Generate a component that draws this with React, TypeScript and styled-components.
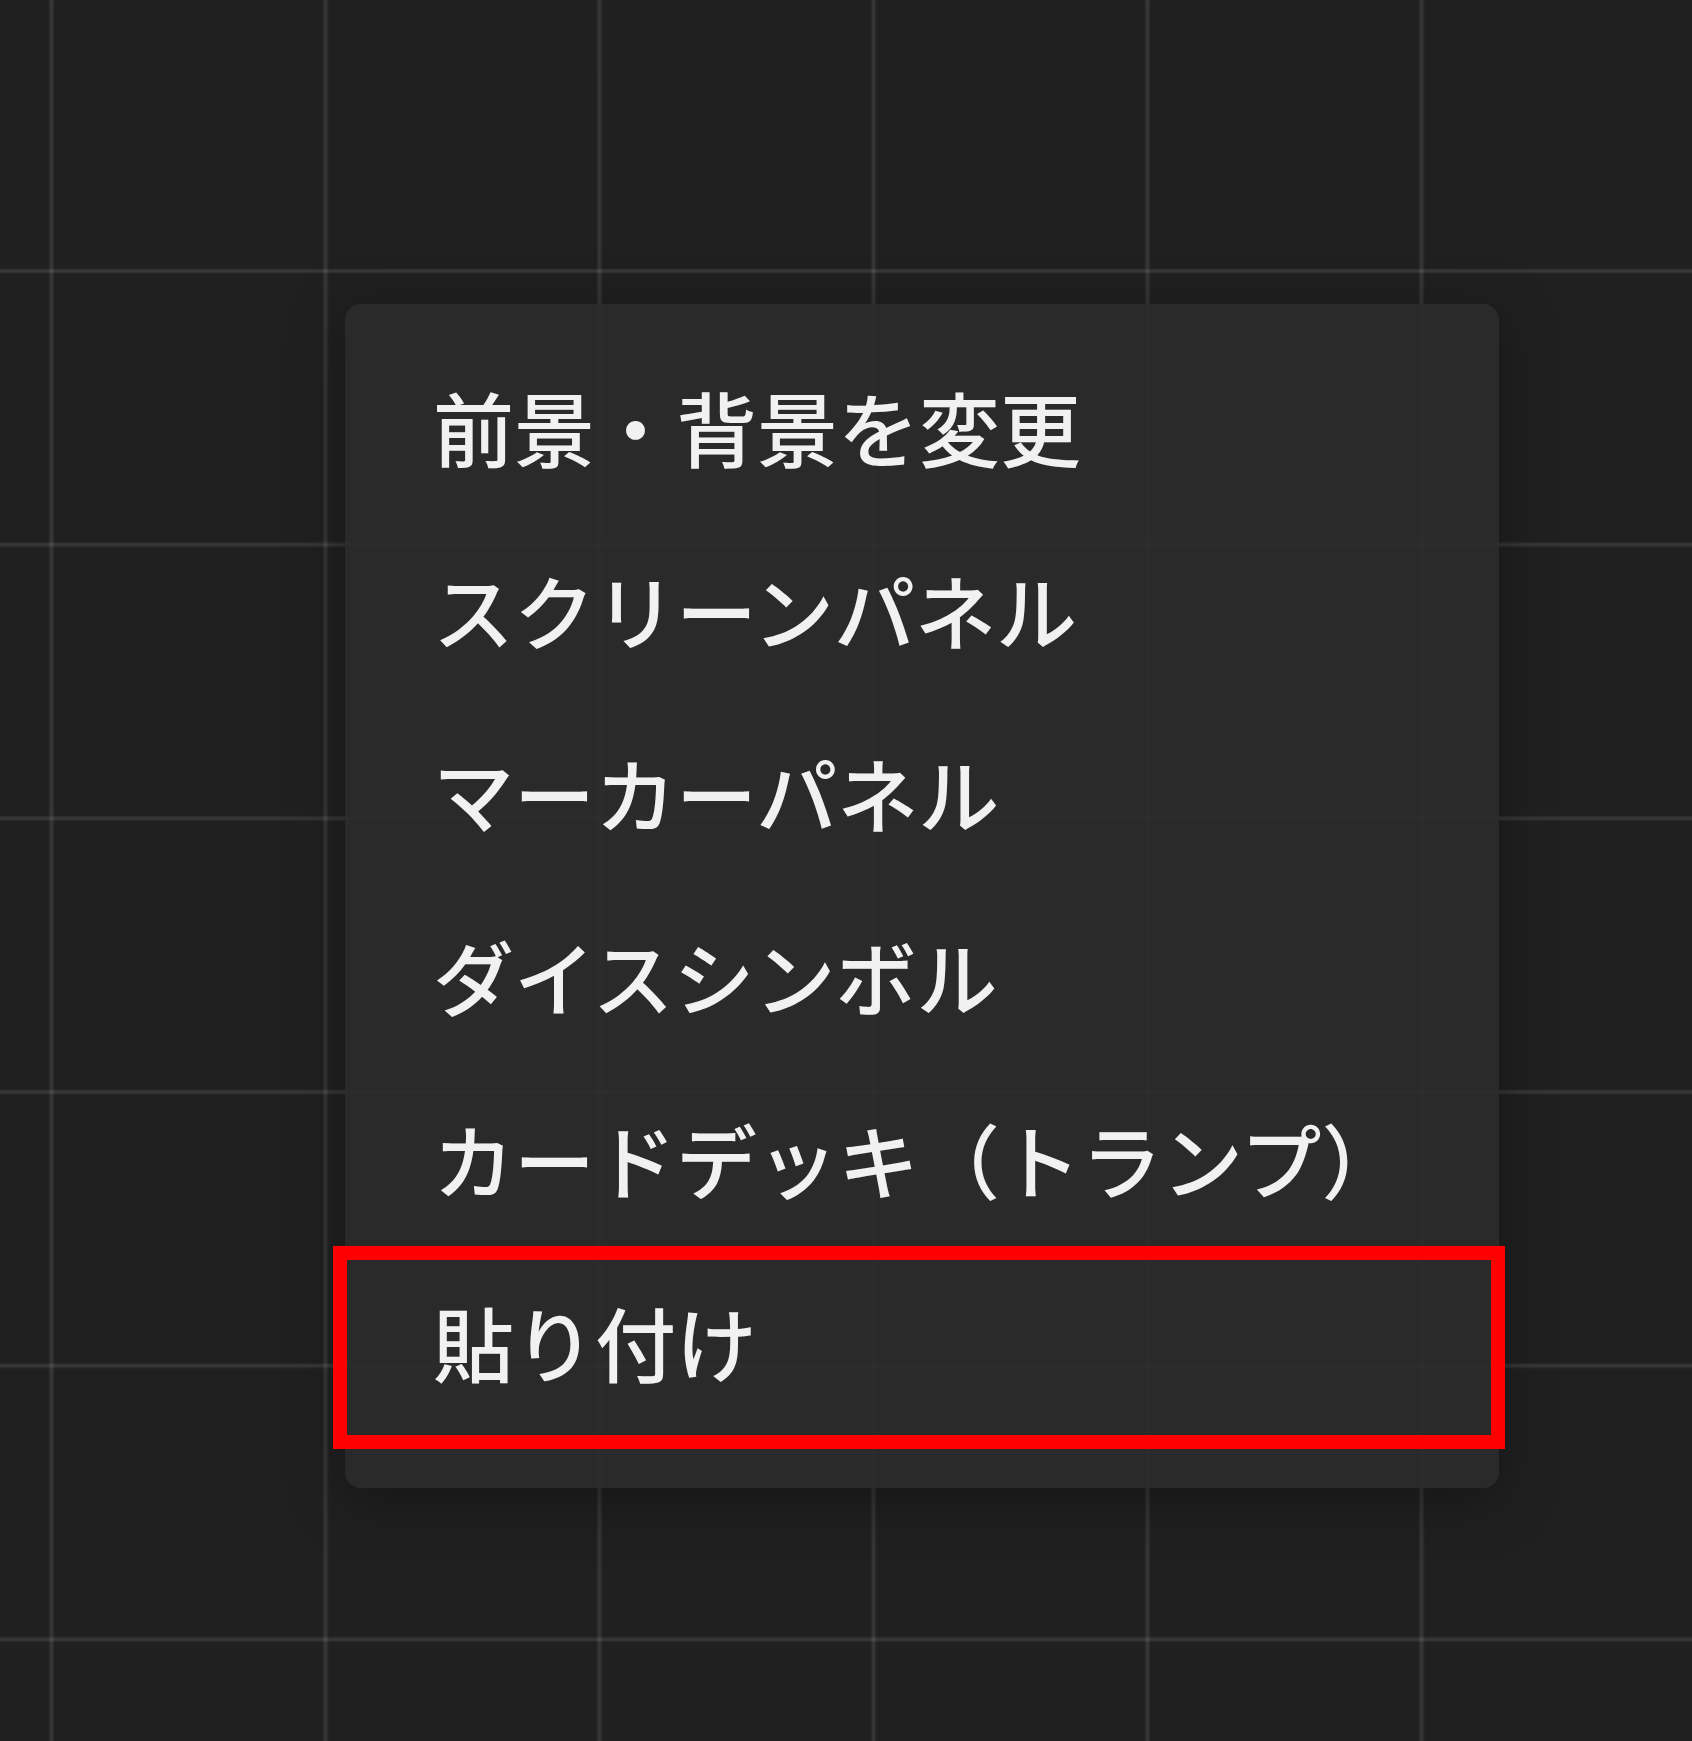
import { FC } from "react";
import styled, { createGlobalStyle } from "styled-components";

const GlobalStyle = createGlobalStyle`
  html, body {
    margin: 0;
    padding: 0;
    background: #202020;
  }
  body {
    font-family: "Noto Sans CJK JP", "Noto Sans", sans-serif;
  }
`;

// キャンバス（グリッド背景）
const Board = styled.div`
  position: relative;
  width: 100%;
  height: 1741px;
  overflow: hidden;
  background-color: #202020;
  background-image:
    linear-gradient(
      90deg,
      transparent 0px,
      rgba(255, 255, 255, 0.07) 1.5px,
      rgba(255, 255, 255, 0.12) 3px,
      rgba(255, 255, 255, 0.07) 4.5px,
      transparent 6px
    ),
    linear-gradient(
      180deg,
      transparent 0px,
      rgba(255, 255, 255, 0.07) 1.5px,
      rgba(255, 255, 255, 0.12) 3px,
      rgba(255, 255, 255, 0.07) 4.5px,
      transparent 6px
    );
  background-size: 274px 273.7px;
  background-position: 48.5px 268px;
`;

// 右クリックメニュー
const ContextMenu = styled.ul`
  position: absolute;
  left: 345px;
  top: 304px;
  width: 1154px;
  margin: 0;
  padding: 30px 0 56px;
  list-style: none;
  box-sizing: border-box;
  background: rgba(43, 43, 43, 0.92);
  border-radius: 16px;
  box-shadow: 0 12px 60px rgba(0, 0, 0, 0.35);
`;

const MenuItem = styled.li<{ $marked?: boolean }>`
  position: relative;
  height: 183px;
  padding: 0 0 0 88px;
  display: flex;
  align-items: center;
  color: #f1f1f1;
  font-size: 81px;
  font-weight: 500;
  line-height: 1;
  white-space: nowrap;
  cursor: default;

  ${({ $marked }) =>
    $marked &&
    `
    &::after {
      content: "";
      position: absolute;
      left: -12px;
      right: -6px;
      top: -3px;
      bottom: -17px;
      border: 14px solid #ff0000;
      box-sizing: border-box;
      pointer-events: none;
    }
  `}
`;

const items = [
  "前景・背景を変更",
  "スクリーンパネル",
  "マーカーパネル",
  "ダイスシンボル",
  "カードデッキ（トランプ）",
  "貼り付け",
];

const App: FC = () => {
  return (
    <>
      <GlobalStyle />
      <Board>
        <ContextMenu>
          {items.map((label, i) => (
            <MenuItem key={label} $marked={i === items.length - 1}>
              {label}
            </MenuItem>
          ))}
        </ContextMenu>
      </Board>
    </>
  );
};

export default App;
